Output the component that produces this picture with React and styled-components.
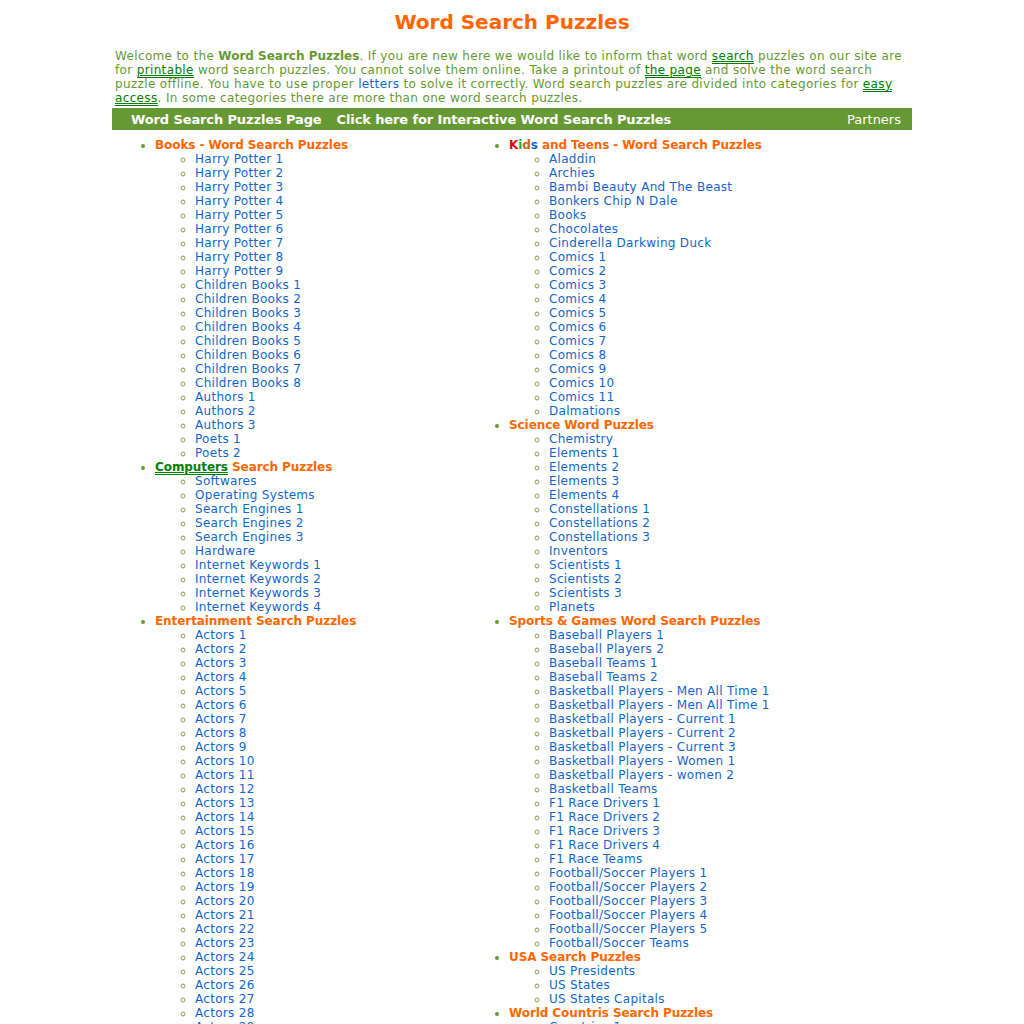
import React from "react";
import styled, { createGlobalStyle } from "styled-components";

const GlobalStyle = createGlobalStyle`
  body {
    margin: 0;
    background: #ffffff;
    font-family: "DejaVu Sans", Verdana, sans-serif;
    font-size: 12px;
  }
`;

const Page = styled.div`
  width: 800px;
  margin: 0 auto;
  padding-top: 9px;
`;

const Title = styled.h1`
  margin: 0 0 14px;
  text-align: center;
  color: #ff6600;
  font-size: 20px;
  font-weight: bold;
  line-height: 26px;
`;

const Intro = styled.p`
  margin: 0 0 3px;
  padding: 0 3px;
  color: #669933;
  line-height: 14px;
  letter-spacing: 0.35px;

  b {
    letter-spacing: 0;
  }
`;

const DoubleLink = styled.a`
  color: #008000;
  text-decoration: underline;
  border-bottom: 1px solid #008000;
`;

const BlueLink = styled.a`
  color: #1166cc;
  text-decoration: none;
`;

const Bar = styled.div`
  display: flex;
  align-items: center;
  height: 22px;
  padding: 0 11px 0 19px;
  background: #669933;
  color: #ffffff;
  font-size: 13px;
`;

const BarLink = styled.a`
  font-weight: bold;
  margin-right: 15px;
  color: #ffffff;
  text-decoration: none;
  letter-spacing: -0.12px;
`;

const BarRight = styled.span`
  margin-left: auto;
`;

const Columns = styled.div`
  display: grid;
  grid-template-columns: 354px 1fr;
  padding-top: 8px;
`;

const Categories = styled.ul`
  margin: 0;
  padding-left: 43px;
  list-style: disc;
  line-height: 14px;
`;

const Category = styled.li`
  color: #ff6600;
  font-weight: bold;
  letter-spacing: -0.08px;
  &::marker {
    color: #669933;
  }
`;

const Items = styled.ul`
  margin: 0;
  padding-left: 40px;
  list-style: circle;
  font-weight: normal;
  letter-spacing: 0.3px;
`;

const Item = styled.li`
  &::marker {
    color: #88a060;
  }
`;

const Letter = styled.span`
  color: ${(p) => p.$c};
`;

const range = (label, n) => Array.from({ length: n }, (_, i) => `${label} ${i + 1}`);

const left = [
  {
    title: "Books - Word Search Puzzles",
    items: [
      ...range("Harry Potter", 9),
      ...range("Children Books", 8),
      ...range("Authors", 3),
      ...range("Poets", 2),
    ],
  },
  {
    title: (
      <>
        <DoubleLink href="#">Computers</DoubleLink> Search Puzzles
      </>
    ),
    items: [
      "Softwares",
      "Operating Systems",
      ...range("Search Engines", 3),
      "Hardware",
      ...range("Internet Keywords", 4),
    ],
  },
  { title: "Entertainment Search Puzzles", items: range("Actors", 32) },
];

const right = [
  {
    title: (
      <>
        <Letter $c="#ee0000">K</Letter>
        <Letter $c="#22aa22">i</Letter>
        <Letter $c="#cc6600">d</Letter>
        <Letter $c="#1166cc">s</Letter> and Teens - Word Search Puzzles
      </>
    ),
    items: [
      "Aladdin",
      "Archies",
      "Bambi Beauty And The Beast",
      "Bonkers Chip N Dale",
      "Books",
      "Chocolates",
      "Cinderella Darkwing Duck",
      ...range("Comics", 11),
      "Dalmations",
    ],
  },
  {
    title: "Science Word Puzzles",
    items: [
      "Chemistry",
      ...range("Elements", 4),
      ...range("Constellations", 3),
      "Inventors",
      ...range("Scientists", 3),
      "Planets",
    ],
  },
  {
    title: "Sports & Games Word Search Puzzles",
    items: [
      ...range("Baseball Players", 2),
      ...range("Baseball Teams", 2),
      "Basketball Players - Men All Time 1",
      "Basketball Players - Men All Time 1",
      ...range("Basketball Players - Current", 3),
      "Basketball Players - Women 1",
      "Basketball Players - women 2",
      "Basketball Teams",
      ...range("F1 Race Drivers", 4),
      "F1 Race Teams",
      ...range("Football/Soccer Players", 5),
      "Football/Soccer Teams",
    ],
  },
  { title: "USA Search Puzzles", items: ["US Presidents", "US States", "US States Capitals"] },
  { title: "World Countris Search Puzzles", items: range("Countries", 4) },
];

function CategoryList({ groups }) {
  return (
    <Categories>
      {groups.map((g, i) => (
        <Category key={i}>
          {g.title}
          <Items>
            {g.items.map((it, j) => (
              <Item key={j}>
                <BlueLink href="#">{it}</BlueLink>
              </Item>
            ))}
          </Items>
        </Category>
      ))}
    </Categories>
  );
}

export default function App() {
  return (
    <>
      <GlobalStyle />
      <Page>
        <Title>Word Search Puzzles</Title>
        <Intro>
          Welcome to the <b>Word Search Puzzles</b>. If you are new here we would like to inform that word{" "}
          <DoubleLink href="#">search</DoubleLink> puzzles on our site are for{" "}
          <DoubleLink href="#">printable</DoubleLink> word search puzzles. You cannot solve them online. Take a
          printout of <DoubleLink href="#">the page</DoubleLink> and solve the word search puzzle offline. You have
          to use proper <BlueLink href="#">letters</BlueLink> to solve it correctly. Word search puzzles are divided
          into categories for <DoubleLink href="#">easy access</DoubleLink>. In some categories there are more than
          one word search puzzles.
        </Intro>
        <Bar>
          <BarLink href="#">Word Search Puzzles Page</BarLink>
          <BarLink href="#">Click here for Interactive Word Search Puzzles</BarLink>
          <BarRight>Partners</BarRight>
        </Bar>
        <Columns>
          <CategoryList groups={left} />
          <CategoryList groups={right} />
        </Columns>
      </Page>
    </>
  );
}
